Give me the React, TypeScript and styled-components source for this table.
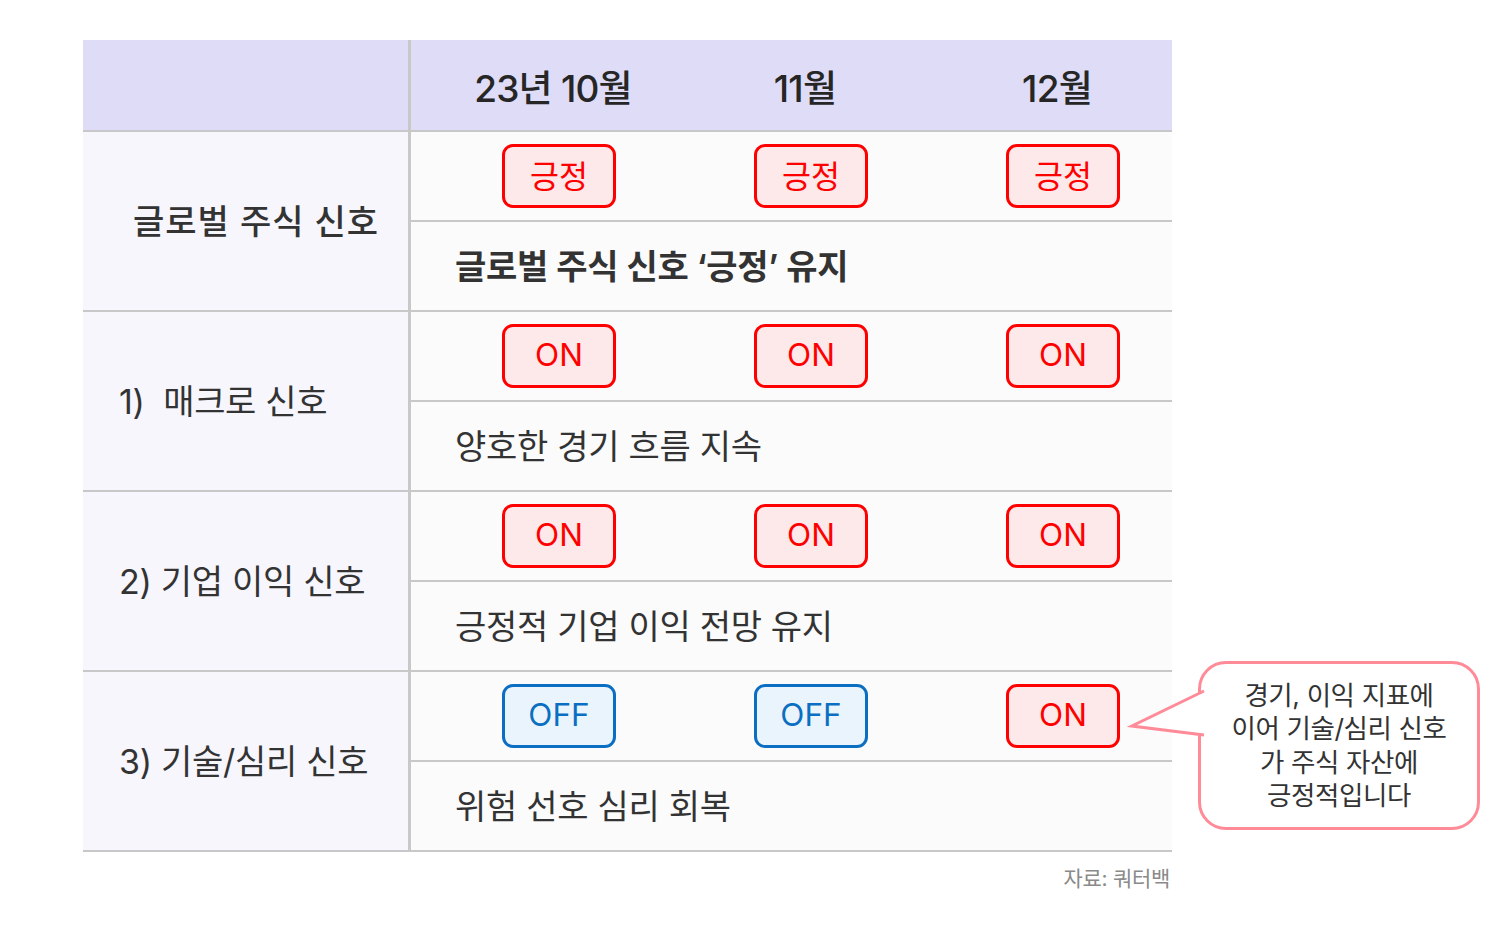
import styled, { createGlobalStyle } from 'styled-components';

const GlobalStyle = createGlobalStyle`
    body {
        margin: 0;
        background: #ffffff;
        font-family: "Inter", "Noto Sans CJK KR", sans-serif;
    }
`;

const Page = styled.div`
    position: relative;
    padding: 40px 0 0 83px;
    width: 1410px;
    height: 903px;
`;

const Table = styled.div`
    display: flex;
    flex-direction: column;
    width: 1089px;
`;

const HeaderRow = styled.div`
    display: flex;
    height: 92px;
    background: #dedcf6;
    border-bottom: 2px solid #c8c8c8;
    box-sizing: border-box;
`;

const GroupRow = styled.div`
    display: flex;
    height: 180px;
    border-bottom: 2px solid #c8c8c8;
    box-sizing: border-box;
`;

const LabelCell = styled.div<{ $indent: number; $weight: number; $spacing: number }>`
    width: 328px;
    flex-shrink: 0;
    box-sizing: border-box;
    border-right: 3px solid #c8c8c8;
    background: #f6f6fc;
    display: flex;
    align-items: center;
    padding-left: ${({ $indent }) => $indent}px;
    padding-bottom: 4px;
    font-size: 34px;
    font-weight: ${({ $weight }) => $weight};
    letter-spacing: ${({ $spacing }) => $spacing}px;
    white-space: pre;
    color: #333333;
`;

const HeaderBlank = styled(LabelCell)`
    background: transparent;
`;

const RightCol = styled.div`
    flex: 1;
    display: flex;
    flex-direction: column;
    background: #fbfbfb;
`;

const Columns = styled.div<{ $start: number }>`
    display: grid;
    grid-template-columns: repeat(3, 200px);
    column-gap: 52px;
    padding-left: ${({ $start }) => $start}px;
    align-items: center;
    justify-items: center;
`;

const MonthRow = styled(Columns)`
    flex: 1;
    font-size: 37px;
    font-weight: 500;
    letter-spacing: -0.8px;
    color: #262626;
    padding-top: 2px;
`;

const BadgeRow = styled(Columns)`
    height: 90px;
    box-sizing: border-box;
    border-bottom: 2px solid #c8c8c8;
    padding-bottom: 1px;
`;

const Badge = styled.div<{ $on: boolean }>`
    width: 114px;
    height: 64px;
    box-sizing: border-box;
    border-radius: 11px;
    border: 3px solid ${({ $on }) => ($on ? '#ff0000' : '#0a6fc2')};
    background: ${({ $on }) => ($on ? '#fde8ea' : '#eaf4fc')};
    color: ${({ $on }) => ($on ? '#ff0000' : '#0a6fc2')};
    display: flex;
    align-items: center;
    justify-content: center;
    font-size: 31.5px;
    padding-bottom: 3px;
`;

const NoteRow = styled.div<{ $bold: boolean }>`
    flex: 1;
    display: flex;
    align-items: center;
    padding-left: 44px;
    padding-bottom: 3px;
    font-size: 34px;
    font-weight: ${({ $bold }) => ($bold ? 600 : 400)};
    letter-spacing: -0.3px;
    color: #333333;
`;

const Source = styled.div`
    width: 1087px;
    text-align: right;
    margin-top: 10px;
    font-size: 21px;
    letter-spacing: -0.3px;
    color: #8a8a8a;
`;

const Callout = styled.div`
    position: absolute;
    left: 1198px;
    top: 661px;
    width: 282px;
    height: 169px;
    box-sizing: border-box;
    border: 3px solid #ff8b98;
    border-radius: 28px;
    background: #ffffff;
    display: flex;
    align-items: center;
    justify-content: center;
    text-align: center;
    font-size: 26.5px;
    line-height: 33.5px;
    letter-spacing: -0.4px;
    color: #333333;
`;

const Tail = styled.svg`
    position: absolute;
    left: -74px;
    top: 23px;
`;

type Signal = {
    label: string;
    indent: number;
    weight: number;
    spacing: number;
    badges: string[];
    note: string;
    bold: boolean;
};

const rows: Signal[] = [
    { label: '글로벌 주식 신호', indent: 50, weight: 500, spacing: 1, badges: ['긍정', '긍정', '긍정'], note: '글로벌 주식 신호 ‘긍정’ 유지', bold: true },
    { label: '1)  매크로 신호', indent: 36, weight: 400, spacing: -0.3, badges: ['ON', 'ON', 'ON'], note: '양호한 경기 흐름 지속', bold: false },
    { label: '2) 기업 이익 신호', indent: 36, weight: 400, spacing: -0.3, badges: ['ON', 'ON', 'ON'], note: '긍정적 기업 이익 전망 유지', bold: false },
    { label: '3) 기술/심리 신호', indent: 36, weight: 400, spacing: -0.3, badges: ['OFF', 'OFF', 'ON'], note: '위험 선호 심리 회복', bold: false },
];

const App = () => {
    return (
        <Page>
            <GlobalStyle />
            <Table>
                <HeaderRow>
                    <HeaderBlank $indent={0} $weight={400} $spacing={0} />
                    <MonthRow $start={42}>
                        <span>23년 10월</span>
                        <span>11월</span>
                        <span>12월</span>
                    </MonthRow>
                </HeaderRow>
                {rows.map((row) => (
                    <GroupRow key={row.label}>
                        <LabelCell $indent={row.indent} $weight={row.weight} $spacing={row.spacing}>
                            {row.label}
                        </LabelCell>
                        <RightCol>
                            <BadgeRow $start={48}>
                                {row.badges.map((b, i) => (
                                    <Badge key={i} $on={b !== 'OFF'}>{b}</Badge>
                                ))}
                            </BadgeRow>
                            <NoteRow $bold={row.bold}>{row.note}</NoteRow>
                        </RightCol>
                    </GroupRow>
                ))}
            </Table>
            <Source>자료: 쿼터백</Source>
            <Callout>
                <Tail width="80" height="52" viewBox="0 0 80 52">
                    <polygon points="4,39 80,3 80,49" fill="#ffffff" />
                    <polyline points="77,4 5,39 77,48" fill="none" stroke="#ff8b98" strokeWidth="3" strokeLinejoin="miter" />
                </Tail>
                <div>
                    경기, 이익 지표에<br />
                    이어 기술/심리 신호<br />
                    가 주식 자산에<br />
                    긍정적입니다
                </div>
            </Callout>
        </Page>
    );
};

export default App;
